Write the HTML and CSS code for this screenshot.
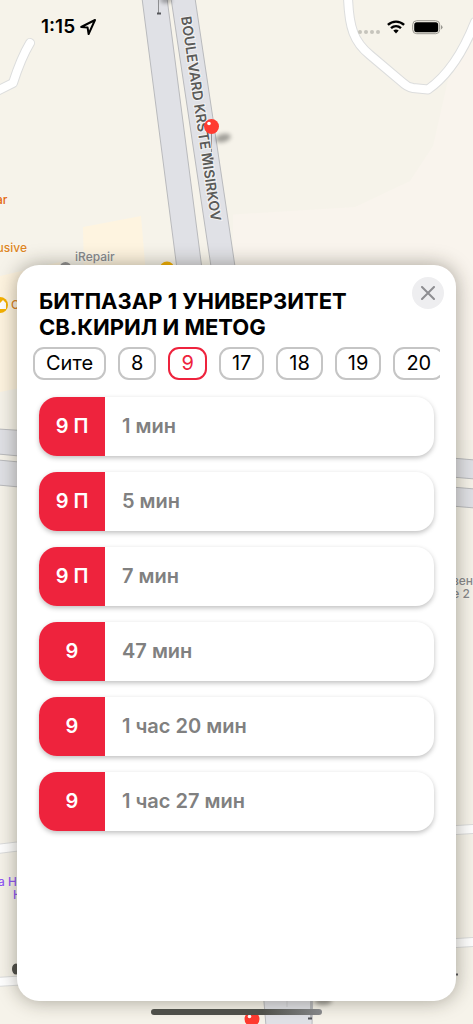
FILE: index.html
```html
<!DOCTYPE html>
<html lang="mk">
<head>
<meta charset="utf-8">
<meta name="viewport" content="width=device-width, initial-scale=1">
<title>Bus arrivals</title>
<link rel="stylesheet" href="styles.css">
</head>
<body>
<svg class="map" viewBox="0 0 473 1024" preserveAspectRatio="xMidYMin slice" aria-hidden="true">
  <defs>
    <filter id="soft" x="-50%" y="-100%" width="200%" height="300%"><feGaussianBlur stdDeviation="2"/></filter>
  </defs>
  <rect class="land" width="473" height="1024"/>
  <path class="district" d="M233 214.500L355 207L410 181L433 146L448 80L473 40V440H233z"/>
  <path class="building" d="M83 227L141 216L146 275H84zM0 276L60 262V380L0 392z"/>
  <path class="avenue" d="M142 -2L167 -2L206 300H181zM171 -2H195L240 300H216z"/>
  <path class="avenue" d="M-2 429L30 431V457L-2 454zM-2 460L30 463V488L-2 485zM440 457L475 460V479L440 476zM440 486L475 489V508L440 505z"/>
  <path class="avenue" d="M263 990H313L312 1026H266z"/>
  <path class="lane" d="M287 990V1007"/>
  <path class="street-edge" d="M30 43Q21 58 13 83L-3 91M348 -3C349 28 354 42 370 55L402 82Q407 87 413 88L428 89.500Q456 70 475 22M-3 849L30 845M-3 982L30 980M440 831L475 829M440 944L475 942"/>
  <path class="street" d="M30 43Q21 58 13 83L-3 91M348 -3C349 28 354 42 370 55L402 82Q407 87 413 88L428 89.500Q456 70 475 22M-3 849L30 845M-3 982L30 980M440 831L475 829M440 944L475 942"/>
  <ellipse class="pin-shadow" cx="223" cy="138" rx="8" ry="4" transform="rotate(-14 223 138)" filter="url(#soft)"/>
  <ellipse class="pin-shadow" cx="323" cy="1001" rx="9" ry="4" filter="url(#soft)"/>
  <ellipse class="pin-shadow" cx="166" cy="0" rx="6" ry="3" filter="url(#soft)"/>
  <path class="pole" d="M158.500 0V13M211.500 130V157M311 1001V1018"/>
  <path class="pole-foot" d="M157 13.500H161M209.500 158.500H213.500M308 1018.500H312M455 974.500H458"/>
  <text class="road-name" x="181" y="17" transform="rotate(81.600 181 17)">BOULEVARD KRSTE MISIRKOV</text>
  <circle class="pin" cx="211.500" cy="126.500" r="7.500"/><circle class="glint" cx="209" cy="123.500" r="1.800"/>
  <circle class="pin" cx="252" cy="1019" r="7.500"/><circle class="glint" cx="249.500" cy="1016.500" r="1.800"/>
  <circle class="dot-gray" cx="65.500" cy="268" r="6"/>
  <circle class="dot-yellow" cx="167" cy="269" r="7.500"/>
  <circle class="dot-yellow" cx="0" cy="305" r="8"/>
  <path class="glint" d="M-4 301L0 303L3 300L6 303V309H-4z"/>
  <ellipse class="dot-dark" cx="16" cy="969" rx="4" ry="5.500"/>
  <text class="poi orange" x="-4" y="204">ar</text>
  <text class="poi amber" x="27" y="252" text-anchor="end">usive</text>
  <text class="poi amber" x="11" y="309">C</text>
  <text class="poi gray" x="75" y="261">iRepair</text>
  <text class="poi violet" x="-2" y="886">а Н</text>
  <text class="poi violet" x="13" y="899">Н</text>
  <text class="poi gray" x="473" y="585" text-anchor="end">вен</text>
  <text class="poi gray" x="470" y="598" text-anchor="end">е 2</text>
</svg>

<header class="status">
  <div class="status-group">
    <span class="time">1:15</span>
    <svg class="location" viewBox="0 0 16 16" aria-hidden="true"><path d="M1.200 8L15 1L8.600 15L7.600 8.600z"/></svg>
  </div>
  <div class="status-group">
    <svg class="signal" viewBox="0 0 22 6" aria-hidden="true"><circle cx="2" cy="3" r="2"/><circle cx="8" cy="3" r="2"/><circle cx="14" cy="3" r="2"/><circle cx="20" cy="3" r="2"/></svg>
    <svg class="wifi" viewBox="0 0 18 14" aria-hidden="true"><path class="arc" d="M.900 4.900C5.500 .500 12.500 .500 17.100 4.900M4 8.200C7 5.500 11 5.500 14 8.200"/><path d="M6.300 10.600Q9 8.600 11.700 10.600L9 13.400z"/></svg>
    <svg class="battery" viewBox="0 0 31 15" aria-hidden="true"><rect class="shell" x=".7" y=".7" width="27" height="13" rx="4"/><rect x="2.200" y="2.200" width="24" height="10" rx="2.500"/><path class="cap" d="M29 5Q32 7.200 29 9.500z"/></svg>
  </div>
</header>

<main class="sheet">
  <div class="heading">
    <h1 class="title">БИТПАЗАР 1 УНИВЕРЗИТЕТ СВ.КИРИЛ И МЕТОG</h1>
    <button class="close" type="button" aria-label="Затвори"><svg viewBox="0 0 14 14" aria-hidden="true"><path d="M1 1L13 13M13 1L1 13"/></svg></button>
  </div>
  <div class="filters">
    <button class="chip" type="button">Сите</button>
    <button class="chip" type="button">8</button>
    <button class="chip active" type="button" aria-pressed="true">9</button>
    <button class="chip" type="button">17</button>
    <button class="chip" type="button">18</button>
    <button class="chip" type="button">19</button>
    <button class="chip" type="button">20</button>
  </div>
  <ul class="arrivals">
    <li class="arrival"><span class="line">9 П</span><span class="wait">1 мин</span></li>
    <li class="arrival"><span class="line">9 П</span><span class="wait">5 мин</span></li>
    <li class="arrival"><span class="line">9 П</span><span class="wait">7 мин</span></li>
    <li class="arrival"><span class="line">9</span><span class="wait">47 мин</span></li>
    <li class="arrival"><span class="line">9</span><span class="wait">1 час 20 мин</span></li>
    <li class="arrival"><span class="line">9</span><span class="wait">1 час 27 мин</span></li>
  </ul>
</main>
<div class="home-bar"></div>
</body>
</html>
```
FILE: styles.css
```css
* { box-sizing: border-box; }

body {
  position: relative;
  display: flex;
  flex-direction: column;
  min-height: 100vh;
  margin: 0;
  overflow-x: hidden;
  background: #f6f3ea;
  color: #000;
  font-family: Inter, "Liberation Sans", sans-serif;
}

/* Map backdrop */
.map { position: absolute; inset: 0; width: 100%; height: 100%; }
.land { fill: #f6f3ea; }
.district { fill: #f9f4ed; }
.building { fill: #fef4e0; }
.avenue { fill: #e0e1e6; stroke: #b9babd; stroke-width: 1; }
.lane { stroke: #cccdd1; }
.street-edge, .street { fill: none; stroke-linecap: round; stroke-linejoin: round; }
.street-edge { stroke: #dcdddd; stroke-width: 10; }
.street { stroke: #fff; stroke-width: 8; }
.pin { fill: #ff3b30; }
.glint { fill: #fff; }
.pin-shadow { fill: #000; opacity: .35; }
.pole { stroke: #8d8e91; stroke-width: 1; }
.pole-foot { stroke: #55565a; stroke-width: 2; }
.road-name { fill: #5b5b59; font-size: 14px; font-weight: 600; stroke: #f2f2f3; stroke-width: 2; paint-order: stroke; }
.poi { font-size: 12px; font-weight: 500; stroke: #fbf8f0; stroke-width: 1; paint-order: stroke; }
.orange { fill: #e2660f; }
.amber { fill: #dd8523; }
.gray { fill: #88898c; }
.violet { fill: #9157f5; }
.dot-gray { fill: #929294; }
.dot-yellow { fill: #f5b100; }
.dot-dark { fill: #50504c; }

/* Status bar */
.status {
  position: relative;
  display: flex;
  justify-content: space-between;
  padding: 16px 30px 0 41px;
}
.status-group { display: flex; align-items: center; height: 22px; gap: 7px; }
.time { font-size: 19px; font-weight: 600; line-height: 22px; }
.location { width: 16px; height: 16px; margin-left: -2px; fill: none; stroke: #000; stroke-width: 2; stroke-linejoin: round; }
.signal { width: 22px; height: 6px; margin-top: 10px; fill: #c6c4bc; }
.wifi { width: 18px; height: 14px; }
.arc { fill: none; stroke: #000; stroke-width: 2.4; }
.battery { width: 31px; height: 15px; }
.shell { fill: none; stroke: #98968f; stroke-width: 1; }
.cap { fill: #98968f; }

/* Stop sheet */
.sheet {
  position: relative;
  flex: 1;
  min-width: 0;
  margin: 227px 17px 8px;
  padding: 12px 16px 24px;
  border-radius: 22px;
  background: #fff;
  box-shadow: 0 0 20px rgba(40, 36, 20, .4);
}
.heading { display: flex; align-items: flex-start; justify-content: space-between; margin: 0 -4px 0 6px; }
.title { max-width: 330px; margin: 11px 0 0; font-size: 22px; font-weight: 700; line-height: 26px; }
.close {
  display: grid;
  flex: none;
  place-items: center;
  width: 32px;
  height: 32px;
  padding: 0;
  border: 0;
  border-radius: 50%;
  background: #eeeef0;
}
.close svg { width: 14px; height: 14px; fill: none; stroke: #8e8e92; stroke-width: 2; stroke-linecap: round; }

.filters { display: flex; gap: 12px; margin-top: 7px; overflow: hidden; }
.chip {
  flex: none;
  height: 33px;
  padding: 0 11px;
  border: 2px solid #c5c5c5;
  border-radius: 11px;
  background: #fff;
  color: #000;
  font: 400 20px/29px Inter, "Liberation Sans", sans-serif;
}
.chip.active { border-color: #ee233d; color: #ee233d; }

.arrivals { display: grid; gap: 16px; margin: 17px 6px 0; padding: 0; list-style: none; }
.arrival {
  display: flex;
  height: 59px;
  overflow: hidden;
  border-radius: 18px;
  background: #fff;
  box-shadow: 0 2px 5px rgba(0, 0, 0, .25);
  font-size: 20px;
  font-weight: 600;
  line-height: 59px;
}
.line { flex: none; width: 66px; background: #ee233d; color: #fff; text-align: center; }
.wait { padding-left: 17px; color: #808080; }

.home-bar {
  position: relative;
  align-self: center;
  width: 36%;
  height: 6px;
  margin-bottom: 9px;
  border-radius: 3px;
  background: linear-gradient(90deg, #4e4f49 65%, #858688);
}
```
